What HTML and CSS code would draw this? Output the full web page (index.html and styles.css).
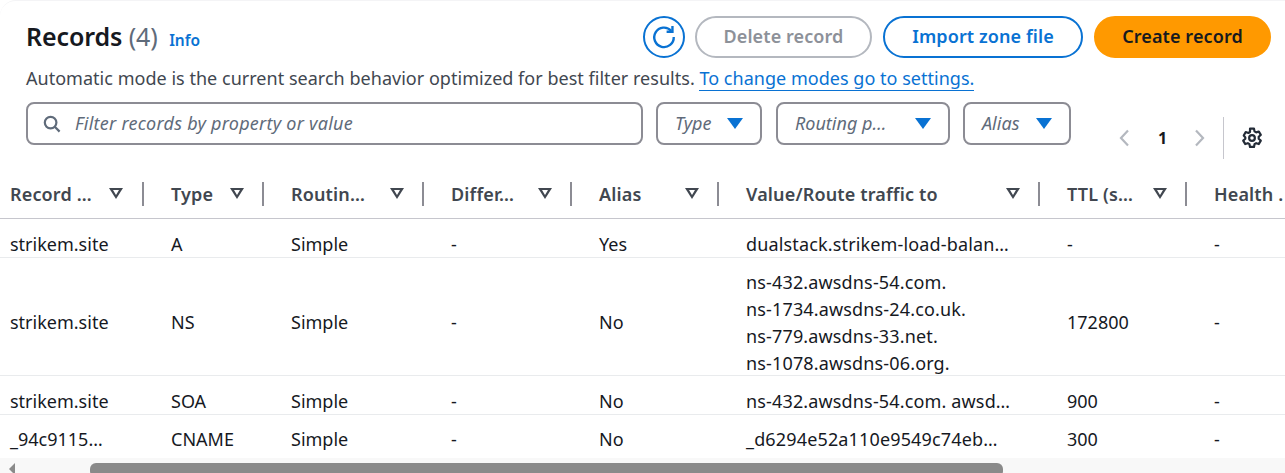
FILE: index.html
```html
<!DOCTYPE html>
<html>
  <head>
    <meta charset="UTF-8" />
    <title>Records</title>
    <link rel="stylesheet" href="styles.css">
  </head>
  <body>
    <div class="card">
      <div class="head">
        <div class="head-top">
          <h2 class="title">Records <span class="count">(4)</span> <a class="info">Info</a></h2>
          <div class="actions">
            <button class="btn btn-icon" type="button" aria-label="Refresh">
              <svg width="26" height="26" viewBox="0 0 24 24" fill="none" stroke="#0972d3" stroke-width="2.2">
                <path d="M18.6 6.2A9 9 0 1 0 21 12" />
                <path d="M19.8 1.8V7.2H14.4" />
              </svg>
            </button>
            <button class="btn btn-disabled" type="button">Delete record</button>
            <button class="btn btn-normal" type="button">Import zone file</button>
            <button class="btn btn-primary" type="button">Create record</button>
          </div>
        </div>
        <p class="desc">Automatic mode is the current search behavior optimized for best filter results. <a class="desc-link">To change modes go to settings.</a></p>
        <div class="filters">
          <div class="search">
            <svg width="18" height="18" viewBox="0 0 18 18" fill="none" stroke="#5f6b7a" stroke-width="2.2">
              <circle cx="7.6" cy="7.6" r="5.8" />
              <path d="M11.8 11.8L16.6 16.6" />
            </svg>
            <span class="field-text">Filter records by property or value</span>
          </div>
          <div class="select select-type"><span class="field-text">Type</span><i class="caret"></i></div>
          <div class="select select-routing"><span class="field-text">Routing p…</span><i class="caret"></i></div>
          <div class="select select-alias"><span class="field-text">Alias</span><i class="caret"></i></div>
          <div class="pager">
            <svg width="12" height="18" viewBox="0 0 12 18" fill="none" stroke="#b4b8bf" stroke-width="2.2"><path d="M10 1.5L3 9l7 7.5" /></svg>
            <span class="page-num">1</span>
            <svg width="12" height="18" viewBox="0 0 12 18" fill="none" stroke="#b4b8bf" stroke-width="2.2"><path d="M2 1.5L9 9l-7 7.5" /></svg>
            <span class="pager-sep"></span>
            <svg class="gear" width="22" height="22" viewBox="0 0 20 20" fill="none" stroke="#232b37" stroke-width="2" stroke-linejoin="round">
              <path d="M8.2 1.5h3.6l.5 2.5 1.5.9 2.4-.8 1.8 3.1-1.9 1.7v1.8l1.9 1.7-1.8 3.1-2.4-.8-1.5.9-.5 2.5H8.2l-.5-2.5-1.5-.9-2.4.8-1.8-3.1 1.9-1.7V9.4L2.5 7.7l1.8-3.1 2.4.8 1.5-.9z" />
              <circle cx="10" cy="10" r="2.6" />
            </svg>
          </div>
        </div>
      </div>

      <table class="records">
        <colgroup>
          <col class="c1"><col class="c2"><col class="c3"><col class="c4"><col class="c5"><col class="c6"><col class="c7"><col class="c8">
        </colgroup>
        <thead>
          <tr>
            <th><div class="th-in"><span>Record …</span><i class="sort"></i></div></th>
            <th><div class="th-in"><span>Type</span><i class="sort"></i></div></th>
            <th><div class="th-in"><span>Routin…</span><i class="sort"></i></div></th>
            <th><div class="th-in"><span>Differ…</span><i class="sort"></i></div></th>
            <th><div class="th-in"><span>Alias</span><i class="sort"></i></div></th>
            <th><div class="th-in"><span>Value/Route traffic to</span><i class="sort"></i></div></th>
            <th><div class="th-in"><span>TTL (s…</span><i class="sort"></i></div></th>
            <th class="last"><div class="th-in"><span>Health .</span></div></th>
          </tr>
        </thead>
        <tbody>
          <tr class="r1">
            <td>strikem.site</td><td>A</td><td>Simple</td><td>-</td><td>Yes</td>
            <td class="value">dualstack.strikem-load-balan…</td><td>-</td><td>-</td>
          </tr>
          <tr class="r2">
            <td>strikem.site</td><td>NS</td><td>Simple</td><td>-</td><td>No</td>
            <td class="value"><div class="ns-list">ns-432.awsdns-54.com.<br>ns-1734.awsdns-24.co.uk.<br>ns-779.awsdns-33.net.<br>ns-1078.awsdns-06.org.</div></td><td>172800</td><td>-</td>
          </tr>
          <tr class="r1">
            <td>strikem.site</td><td>SOA</td><td>Simple</td><td>-</td><td>No</td>
            <td class="value">ns-432.awsdns-54.com. awsd…</td><td>900</td><td>-</td>
          </tr>
          <tr class="r4">
            <td>_94c9115…</td><td>CNAME</td><td>Simple</td><td>-</td><td>No</td>
            <td class="value">_d6294e52a110e9549c74eb…</td><td>300</td><td>-</td>
          </tr>
        </tbody>
      </table>

      <div class="scrollbar">
        <i class="scroll-left"></i>
        <div class="scroll-thumb"></div>
      </div>
    </div>
  </body>
</html>
```
FILE: styles.css
```css
* {
    box-sizing: border-box;
}

html, body {
    height: 100%;
}

body {
    margin: 0;
    padding: 0;
    overflow: hidden;
    font-family: "Noto Sans", Arial, sans-serif;
    font-size: 18px;
    color: #16191f;
    background-color: #fff;
}

.card {
    height: 473px;
    overflow: hidden;
    border-top-left-radius: 16px;
    border-top: 1px solid #f4f4f6;
}

.head {
    padding: 15px 14px 0 26px;
}

.head-top {
    display: flex;
    justify-content: space-between;
    align-items: flex-start;
    height: 50px;
}

.title {
    margin: 2px 0 0;
    font-size: 25px;
    line-height: 36px;
    font-weight: 600;
    letter-spacing: -0.1px;
}

.count {
    font-weight: 400;
    color: #5f6b7a;
}

.info {
    margin-left: 5px;
    font-size: 15.5px;
    font-weight: 600;
    letter-spacing: 0;
    color: #0972d3;
}

.actions {
    display: flex;
    gap: 11px;
}

.btn {
    height: 42px;
    padding: 0 0 2px;
    border-radius: 21px;
    border: 2px solid;
    font-family: inherit;
    font-size: 18px;
    font-weight: 600;
    background-color: #fff;
    letter-spacing: 0.1px;
}

.btn-icon {
    width: 42px;
    margin-right: -1px;
    padding: 0;
    display: flex;
    align-items: center;
    justify-content: center;
    border-color: #0972d3;
}

.btn-disabled {
    width: 177px;
    color: #8d9199;
    border-color: #b4b8bf;
}

.btn-normal {
    width: 200px;
    color: #0972d3;
    border-color: #0972d3;
}

.btn-primary {
    width: 177px;
    color: #16191f;
    background-color: #ff9900;
    border-color: #ff9900;
}

.desc {
    margin: 0;
    height: 27px;
    line-height: 24px;
    font-size: 18px;
    letter-spacing: 0.025px;
    color: #414750;
}

.desc-link {
    color: #0972d3;
    border-bottom: 1px solid #0972d3;
}

.filters {
    display: flex;
    align-items: flex-start;
    margin-top: 9px;
}

.search {
    display: flex;
    align-items: center;
    gap: 14px;
    width: 617px;
    height: 43px;
    padding-left: 15px;
    border: 2px solid #8c8c94;
    border-radius: 8px;
    font-style: italic;
    letter-spacing: 0.25px;
    color: #5f6b7a;
}

.field-text {
    padding-bottom: 2px;
}

.select {
    display: flex;
    align-items: center;
    justify-content: space-between;
    height: 43px;
    margin-left: 13px;
    padding: 0 17px;
    border: 2px solid #8c8c94;
    border-radius: 8px;
    font-style: italic;
    color: #5f6b7a;
}

.select-type {
    width: 106px;
}

.select-routing {
    width: 174px;
    margin-left: 14px;
}

.select-alias {
    width: 108px;
}

.caret {
    width: 0;
    height: 0;
    border-left: 8px solid transparent;
    border-right: 8px solid transparent;
    border-top: 11px solid #0972d3;
}

.pager {
    display: flex;
    align-items: center;
    height: 44px;
    margin-top: 14px;
    margin-left: 47px;
}

.page-num {
    margin: 0 27px 0 28px;
    font-weight: 700;
    font-size: 16px;
}

.pager-sep {
    width: 1px;
    height: 42px;
    margin: 0 17px 0 17px;
    background-color: #c6c6cd;
}

.records {
    width: 1285px;
    margin-top: 10px;
    table-layout: fixed;
    border-collapse: collapse;
}

.c1 { width: 144px; }
.c2 { width: 120px; }
.c3 { width: 160px; }
.c4 { width: 148px; }
.c5 { width: 147px; }
.c6 { width: 321px; }
.c7 { width: 147px; }
.c8 { width: 98px; }

.records th {
    height: 48px;
    padding: 0;
    border-bottom: 1px solid #c6c6cd;
    text-align: left;
}

.th-in {
    display: flex;
    align-items: center;
    justify-content: space-between;
    height: 24px;
    padding: 0 19px 0 10px;
    font-weight: 600;
    font-size: 18px;
    letter-spacing: 0.15px;
    color: #414750;
    border-right: 2px solid #8c8c94;
    white-space: nowrap;
}

th:nth-child(n+2) .th-in {
    padding: 0 18px 0 27px;
}

.last .th-in {
    border-right: none;
}

.sort {
    width: 0;
    height: 0;
    position: relative;
    border-left: 7px solid transparent;
    border-right: 7px solid transparent;
    border-top: 11px solid #414750;
}

.sort::after {
    content: "";
    position: absolute;
    left: -3px;
    top: -9px;
    border-left: 3px solid transparent;
    border-right: 3px solid transparent;
    border-top: 5px solid #fff;
}

.records td {
    padding: 12px 0 0 27px;
    vertical-align: top;
    border-bottom: 1px solid #e9ebed;
    font-size: 18px;
    line-height: 26px;
    white-space: nowrap;
    overflow: hidden;
}

.records td:first-child {
    padding-left: 10px;
}

.records td.value {
    letter-spacing: 0.15px;
}

.records .r2 td {
    height: 117px;
    padding-top: 51px;
}

.records .r2 td.value {
    padding-top: 11px;
}

.ns-list {
    height: 106px;
    line-height: 27px;
}

.records .r4 td {
    height: 44px;
    padding-top: 11px;
    border-bottom: none;
}

.scrollbar {
    position: relative;
    height: 15px;
    background-color: #f8f8f8;
}

.scroll-left {
    position: absolute;
    left: 9px;
    top: 5px;
    border-top: 6px solid transparent;
    border-bottom: 6px solid transparent;
    border-right: 6px solid #8a8a8a;
}

.scroll-thumb {
    position: absolute;
    left: 90px;
    top: 5px;
    width: 913px;
    height: 14px;
    border-radius: 6px;
    background-color: #8a8a8a;
}
```
